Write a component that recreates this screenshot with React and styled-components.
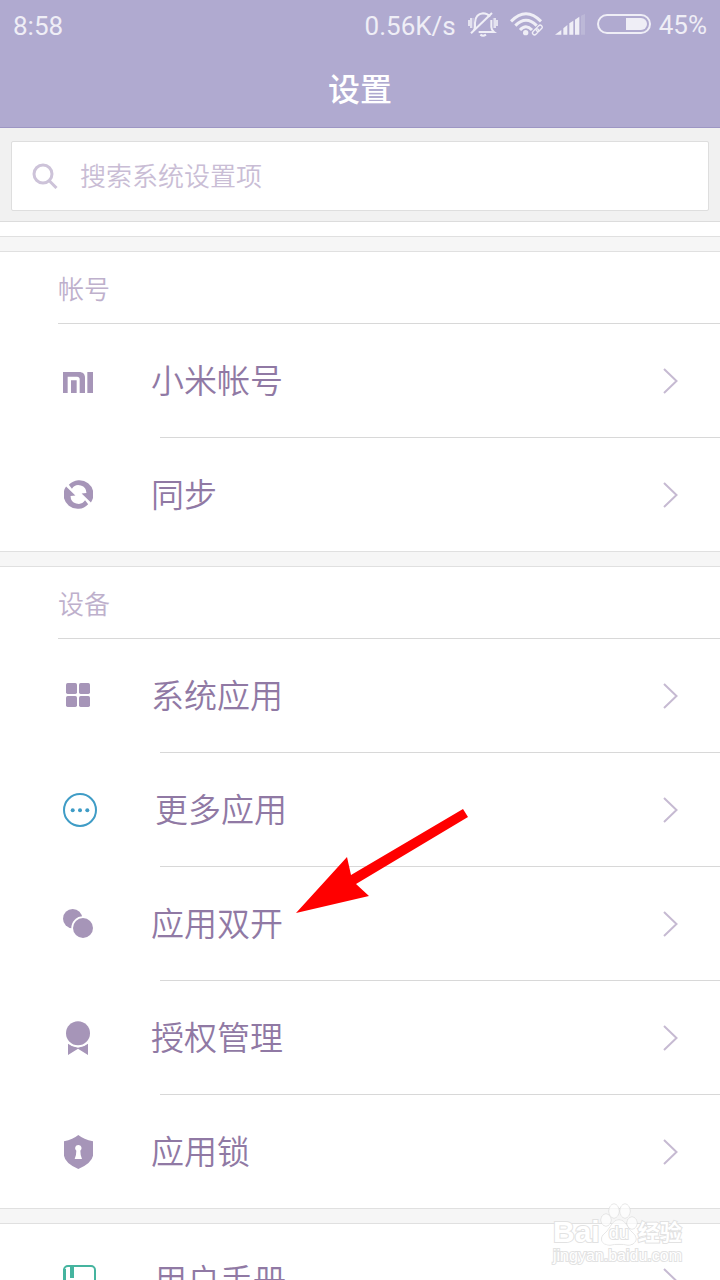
import React from "react";
import styled, { createGlobalStyle } from "styled-components";

const cjk = `"Noto Sans CJK SC", sans-serif`;

const GlobalStyle = createGlobalStyle`
  *, *::before, *::after { box-sizing: border-box; }
  html, body, #root { height: 100%; }
  body { margin: 0; background: #fff; font-family: ${cjk}; }
  ul { list-style: none; margin: 0; padding: 0; }
`;

const Page = styled.div`
  position: relative;
  display: flex;
  flex-direction: column;
  height: 100%;
  overflow: hidden;
`;

const Header = styled.header`
  flex: none;
  background: #b0aad0;
  border-bottom: 1px solid #9d96c4;
`;

const StatusBar = styled.div`
  display: flex;
  align-items: center;
  justify-content: space-between;
  height: 50px;
  padding: 0 13px;
  color: #efeef6;
  font-family: Roboto, sans-serif;
  font-size: 26px;
  line-height: 32px;
`;

const StatusText = styled.span`
  padding-top: 2px;
`;

const StatusGroup = styled.div`
  display: flex;
  align-items: center;
  gap: ${(p) => p.$gap}px;
`;

const StatusIcon = styled.svg`
  display: block;
  flex: none;
`;

const Title = styled.h1`
  margin: 0;
  height: 77px;
  color: #fff;
  font-size: 32px;
  font-weight: 500;
  line-height: 74px;
  text-align: center;
`;

const SearchArea = styled.form`
  flex: none;
  padding: 13px 11px 10px;
  background: #f1f1f1;
  border-bottom: 1px solid #dcdcdc;
`;

const SearchBox = styled.label`
  display: flex;
  align-items: center;
  gap: 22px;
  height: 70px;
  padding: 0 20px;
  background: #fff;
  border: 1px solid #dedede;
  border-radius: 2px;
`;

const SearchInput = styled.input`
  flex: 1;
  min-width: 0;
  padding: 0 0 2px;
  border: 0;
  outline: 0;
  background: transparent;
  color: #9079a4;
  font-family: ${cjk};
  font-size: 26px;
  font-weight: 350;
  line-height: 40px;
  &::placeholder { color: #c9bdd5; opacity: 1; }
`;

const List = styled.main`
  flex: 1;
  min-height: 0;
  padding-top: 14px;
  overflow-y: auto;
  scrollbar-width: none;
`;

const Group = styled.section`
  &::before {
    content: "";
    display: block;
    height: 16px;
    background: #f6f6f6;
    border: solid #e0e0e0;
    border-width: 1px 0;
  }
`;

const GroupTitle = styled.h2`
  margin: 0 0 0 58px;
  height: 72px;
  border-bottom: 1px solid #d8d8d8;
  color: #beb0cc;
  font-size: 26px;
  font-weight: 350;
  line-height: 72px;
`;

const Item = styled.li`
  position: relative;
  &:not(:last-child)::after {
    content: "";
    display: block;
    height: 1px;
    margin-left: 160px;
    background: #d8d8d8;
  }
`;

const RowLink = styled.a`
  display: flex;
  align-items: center;
  height: 113px;
  padding: 0 42px 0 63px;
  color: #9079a4;
  text-decoration: none;
`;

const IconSlot = styled.span`
  display: flex;
  justify-content: center;
  min-width: 30px;
  margin-right: 58px;
`;

const Label = styled.span`
  flex: 1;
  padding-bottom: 3px;
  font-size: 33px;
  font-weight: 350;
  line-height: 48px;
`;

const Pointer = styled.svg`
  position: absolute;
  left: 296px;
  top: -59px;
  pointer-events: none;
`;

const Watermark = styled.div`
  position: absolute;
  right: 39px;
  bottom: 16px;
  width: 128px;
  color: #fff;
  font-family: "Liberation Sans", ${cjk};
  -webkit-text-stroke: 2px #e2e2e2;
  paint-order: stroke fill;
  white-space: nowrap;
  pointer-events: none;
`;

const Brand = styled.div`
  display: flex;
  align-items: flex-end;
  font-size: 30px;
  font-weight: 700;
  line-height: 32px;
`;

const Paw = styled.span`
  position: relative;
  flex: none;
  width: 38px;
  height: 45px;
  svg { display: block; }
`;

const PawText = styled.span`
  position: absolute;
  left: 0;
  right: 0;
  bottom: 5px;
  font-size: 18px;
  font-weight: 400;
  line-height: 20px;
  text-align: center;
`;

const BrandCjk = styled.span`
  font-family: ${cjk};
  font-size: 22px;
  line-height: 36px;
`;

const Site = styled.div`
  font-size: 16px;
  line-height: 16px;
`;

const purple = "#a695b8";

const MiIcon = () => (
  <svg width="30" height="24" viewBox="0 0 90 72" fill={purple}>
    <path d="M0 9H48C60 9 66 15 66 27V72H50V31Q50 23 42 23H14V72H0Z" />
    <path d="M24 34H41V72H24ZM73 9H90V72H73Z" />
  </svg>
);

const SyncIcon = () => (
  <svg width="29" height="29" viewBox="0 0 84 84" fill={purple}>
    <path d="M14 14A41 41 0 0 1 78 65L51 39L65 38A23 23 0 0 0 23 25Z" />
    <path d="M70 70A41 41 0 0 1 6 19L33 45L19 46A23 23 0 0 0 61 59Z" />
  </svg>
);

const GridIcon = () => (
  <svg width="24" height="25" viewBox="0 0 72 75" fill={purple}>
    <rect width="33" height="33" rx="5" />
    <rect x="39" width="33" height="33" rx="5" />
    <rect y="39" width="33" height="33" rx="5" />
    <rect x="39" y="39" width="33" height="33" rx="5" />
  </svg>
);

const MoreIcon = () => (
  <svg width="34" height="34" viewBox="0 0 34 34" fill="#3f9cc6">
    <circle cx="17" cy="17" r="16" fill="none" stroke="#3f9cc6" strokeWidth="2" />
    <circle cx="9.7" cy="17.3" r="2" />
    <circle cx="17" cy="17.3" r="2" />
    <circle cx="24.3" cy="17.3" r="2" />
  </svg>
);

const DualIcon = () => (
  <svg width="30" height="29" viewBox="0 0 90 87" fill={purple}>
    <circle cx="29" cy="29" r="29" />
    <circle cx="60" cy="57" r="35" fill="#fff" />
    <circle cx="60" cy="57" r="30" />
  </svg>
);

const BadgeIcon = () => (
  <svg width="24" height="34" viewBox="0 0 72 102" fill={purple}>
    <path d="M6 68Q18 78 36 80Q54 78 66 68V102L36 83L6 102Z" />
    <circle cx="36" cy="37" r="41" fill="#fff" />
    <circle cx="36" cy="37" r="36" />
  </svg>
);

const ShieldIcon = () => (
  <svg width="30" height="34" viewBox="0 0 90 102">
    <path d="M46 0Q62 13 90 19V62Q86 84 46 102Q6 84 3 62V19Q30 13 46 0Z" fill={purple} />
    <path d="M46 30A9.500 9.500 0 0 1 52 47Q52 62 57 72H35Q40 62 40 47A9.500 9.500 0 0 1 46 30Z" fill="#fff" />
  </svg>
);

const BookIcon = () => (
  <svg width="33" height="32" viewBox="0 0 33 32" fill="none" stroke="#45b49f" strokeWidth="2">
    <rect x="1" y="1" width="31" height="30" rx="4" />
    <path d="M1.500 4V28" strokeWidth="3" />
    <path d="M9 1V13" strokeWidth="4" />
  </svg>
);

const Chevron = () => (
  <svg width="15" height="26" viewBox="0 0 15 26" fill="none" stroke="#c6bad2" strokeWidth="2">
    <path d="M1 1L13.500 13L1 25" />
  </svg>
);

const MuteIcon = () => (
  <StatusIcon width="30" height="26" viewBox="0 0 90 78" fill="none" stroke="#efeef6" strokeWidth="6">
    <path d="M66 14Q58 4 45 4Q22 6 21 32V46L18 55M70 24V45Q70 54 78 60H32" />
    <path d="M9 64L72 3" />
    <path d="M37 68Q45 74 54 68" strokeWidth="6" />
    <path d="M3 24V42M9 18V48M81 18V48M87 24V42" strokeWidth="5" />
    <path d="M15 18V48M76 18V48" strokeWidth="3" opacity="0.6" />
  </StatusIcon>
);

const WifiIcon = () => (
  <StatusIcon width="33" height="26" viewBox="0 0 99 78" fill="none" stroke="#efeef6">
    <path d="M3 28Q48 -18 93 28" strokeWidth="9" />
    <path d="M16 41Q48 8 80 41" strokeWidth="9" />
    <path d="M30 54Q48 35 66 54" strokeWidth="9" />
    <circle cx="47" cy="62" r="8" fill="#efeef6" stroke="none" />
    <g transform="rotate(-45 82 54)" strokeWidth="4">
      <rect x="64" y="48" width="21" height="12" rx="6" />
      <rect x="79" y="48" width="21" height="12" rx="6" />
    </g>
  </StatusIcon>
);

const SignalIcon = () => (
  <StatusIcon width="30" height="22" viewBox="0 0 90 66" fill="#efeef6">
    <path d="M0 62L19 48V62ZM25 43L37 33V62H25ZM43 28L55 20V62H43ZM60 17L73 8V62H60Z" />
    <path d="M78 5L90 0V62H78Z" opacity="0.2" />
  </StatusIcon>
);

const BatteryIcon = () => (
  <StatusIcon width="54" height="22" viewBox="0 0 54 22">
    <rect x="1" y="1" width="52" height="18" rx="9" fill="none" stroke="#efeef6" strokeWidth="2" />
    <path d="M29 4H44A6 6 0 0 1 44 16H29Z" fill="#efeef6" />
  </StatusIcon>
);

const SearchIcon = () => (
  <svg width="26" height="26" viewBox="0 0 26 26" fill="none" stroke="#cdc3d9" strokeWidth="3">
    <circle cx="11" cy="11" r="9" />
    <path d="M17 17.500L24.500 25" />
  </svg>
);

const groups = [
  {
    title: "帐号",
    rows: [
      { label: "小米帐号", icon: MiIcon },
      { label: "同步", icon: SyncIcon },
    ],
  },
  {
    title: "设备",
    rows: [
      { label: "系统应用", icon: GridIcon },
      { label: "更多应用", icon: MoreIcon },
      { label: "应用双开", icon: DualIcon, pointed: true },
      { label: "授权管理", icon: BadgeIcon },
      { label: "应用锁", icon: ShieldIcon },
    ],
  },
  { rows: [{ label: "用户手册", icon: BookIcon }] },
];

export default function App() {
  return (
    <Page>
      <GlobalStyle />
      <Header>
        <StatusBar>
          <StatusText>8:58</StatusText>
          <StatusGroup $gap={12}>
            <StatusText>0.56K/s</StatusText>
            <MuteIcon />
            <WifiIcon />
            <SignalIcon />
            <StatusGroup $gap={8}>
              <BatteryIcon />
              <span>45%</span>
            </StatusGroup>
          </StatusGroup>
        </StatusBar>
        <Title>设置</Title>
      </Header>
      <SearchArea role="search">
        <SearchBox>
          <SearchIcon />
          <SearchInput type="text" placeholder="搜索系统设置项" aria-label="搜索系统设置项" />
        </SearchBox>
      </SearchArea>
      <List>
        {groups.map((group, i) => (
          <Group key={i}>
            {group.title && <GroupTitle>{group.title}</GroupTitle>}
            <ul>
              {group.rows.map(({ label, icon: Icon, pointed }) => (
                <Item key={label}>
                  <RowLink href="#">
                    <IconSlot><Icon /></IconSlot>
                    <Label>{label}</Label>
                    <Chevron />
                  </RowLink>
                  {pointed && (
                    <Pointer width="172" height="106" viewBox="0 0 172 106" fill="#f00">
                      <path d="M0 105L51 49L55 67L167 1L172 9L60 76L73 88Z" />
                    </Pointer>
                  )}
                </Item>
              ))}
            </ul>
          </Group>
        ))}
      </List>
      <Watermark>
        <Brand>
          <span>Bai</span>
          <Paw>
            <svg width="38" height="45" viewBox="0 0 38 45" fill="#fff" fillOpacity="0.7" stroke="#dadada">
              <ellipse cx="6" cy="17" rx="5" ry="6" />
              <ellipse cx="14" cy="8" rx="5" ry="7" />
              <ellipse cx="25" cy="8" rx="5" ry="7" />
              <ellipse cx="32" cy="20" rx="5" ry="6" />
              <path d="M19 17C26 17 27 25 32 29C39 35 36 42 28 42C22 41 16 41 10 42C1 42 -1 35 5 30C11 25 12 17 19 17Z" />
            </svg>
            <PawText>du</PawText>
          </Paw>
          <BrandCjk>经验</BrandCjk>
        </Brand>
        <Site>jingyan.baidu.com</Site>
      </Watermark>
    </Page>
  );
}
